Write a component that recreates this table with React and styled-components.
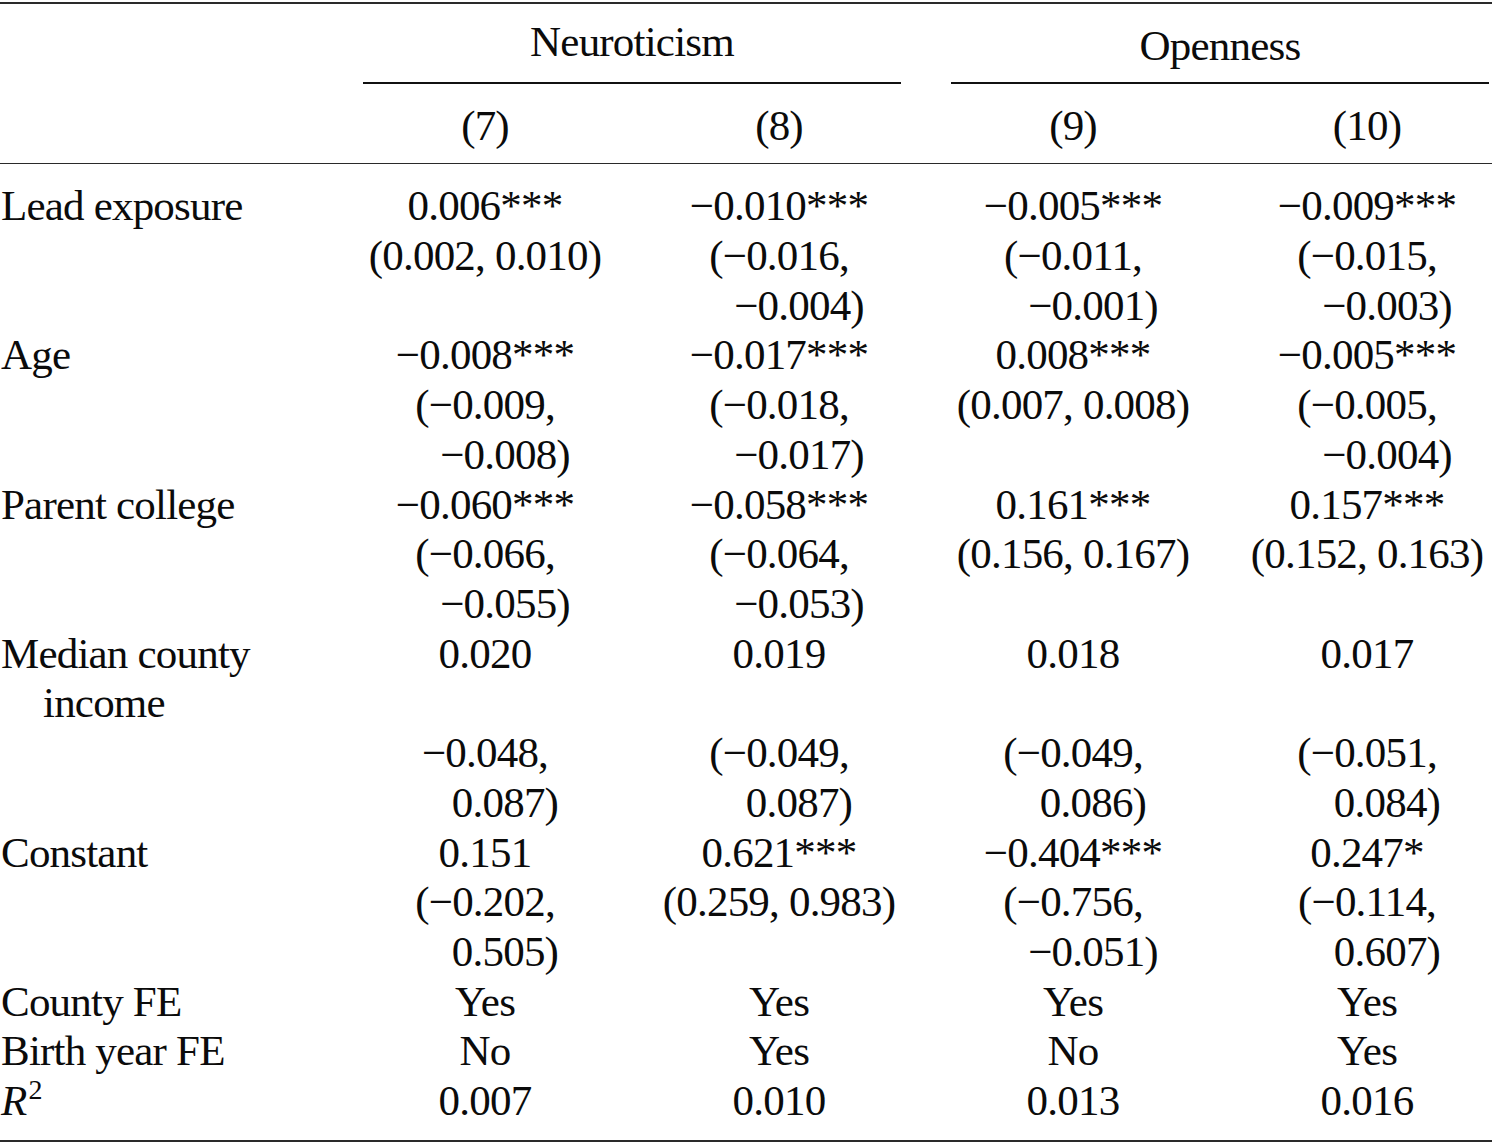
import React from "react";
import styled, { createGlobalStyle } from "styled-components";

const GlobalStyle = createGlobalStyle`
  html, body {
    margin: 0;
    padding: 0;
    background: #ffffff;
  }
`;

const Table = styled.div`
  display: grid;
  grid-template-columns: 316px repeat(4, 250px);
  column-gap: 44px;
  width: 1493px;
  font-family: "Liberation Serif", "Times New Roman", serif;
  font-size: 43px;
  letter-spacing: -0.8px;
  line-height: 49.72px;
  color: #0b0b0b;
`;

const Rule = styled.div`
  grid-column: 1 / -1;
  height: ${({ $weight }) => $weight}px;
  background: #2a2a2a;
  margin-top: ${({ $top }) => $top || 0}px;
  margin-bottom: ${({ $bottom }) => $bottom || 0}px;
`;

const Blank = styled.div``;

const Spanner = styled.div`
  grid-column: span 2;
  display: flex;
  flex-direction: column;
  padding-top: ${({ $drop }) => 12.6 + ($drop || 0)}px;
`;

const SpannerTitle = styled.div`
  text-align: center;
  white-space: nowrap;
`;

const SpannerRule = styled.div`
  height: 1.3px;
  background: #111;
  margin: ${({ $drop }) => 16 - ($drop || 0)}px 3px 0 3px;
`;

const HeadCell = styled.div`
  text-align: center;
  padding-top: 17.3px;
  padding-bottom: 12px;
  white-space: nowrap;
`;

const LabelCell = styled.div`
  display: flex;
  flex-direction: column;
`;

const LabelLine = styled.div`
  white-space: nowrap;
  padding-left: ${({ $hang }) => ($hang ? 43 : 1)}px;
`;

const ValueCell = styled.div`
  display: flex;
  flex-direction: column;
`;

const ValueLine = styled.div`
  text-align: center;
  white-space: nowrap;
  padding-left: ${({ $cont }) => ($cont ? 40 : 0)}px;
`;

const Italic = styled.span`
  font-style: italic;
`;

const Sup = styled.sup`
  font-size: 28px;
  line-height: 0;
  vertical-align: 16px;
  margin-left: 2px;
`;

const M = "\u2212";

const rows = [
  {
    label: ["Lead exposure"],
    cells: [
      ["0.006***", "(0.002, 0.010)"],
      [`${M}0.010***`, `(${M}0.016,`, `>${M}0.004)`],
      [`${M}0.005***`, `(${M}0.011,`, `>${M}0.001)`],
      [`${M}0.009***`, `(${M}0.015,`, `>${M}0.003)`],
    ],
  },
  {
    label: ["Age"],
    cells: [
      [`${M}0.008***`, `(${M}0.009,`, `>${M}0.008)`],
      [`${M}0.017***`, `(${M}0.018,`, `>${M}0.017)`],
      ["0.008***", "(0.007, 0.008)"],
      [`${M}0.005***`, `(${M}0.005,`, `>${M}0.004)`],
    ],
  },
  {
    label: ["Parent college"],
    cells: [
      [`${M}0.060***`, `(${M}0.066,`, `>${M}0.055)`],
      [`${M}0.058***`, `(${M}0.064,`, `>${M}0.053)`],
      ["0.161***", "(0.156, 0.167)"],
      ["0.157***", "(0.152, 0.163)"],
    ],
  },
  {
    label: ["Median county", ">income"],
    cells: [
      ["0.020", "", `${M}0.048,`, ">0.087)"],
      ["0.019", "", `(${M}0.049,`, ">0.087)"],
      ["0.018", "", `(${M}0.049,`, ">0.086)"],
      ["0.017", "", `(${M}0.051,`, ">0.084)"],
    ],
  },
  {
    label: ["Constant"],
    cells: [
      ["0.151", `(${M}0.202,`, ">0.505)"],
      ["0.621***", "(0.259, 0.983)"],
      [`${M}0.404***`, `(${M}0.756,`, `>${M}0.051)`],
      ["0.247*", `(${M}0.114,`, ">0.607)"],
    ],
  },
  {
    label: ["County FE"],
    cells: [["Yes"], ["Yes"], ["Yes"], ["Yes"]],
  },
  {
    label: ["Birth year FE"],
    cells: [["No"], ["Yes"], ["No"], ["Yes"]],
  },
  {
    label: ["R2"],
    cells: [["0.007"], ["0.010"], ["0.013"], ["0.016"]],
  },
];

// a leading ">" marks a wrapped continuation line
const split = (text) =>
  text.startsWith(">") ? [text.slice(1), true] : [text, false];

const Label = ({ lines }) => (
  <LabelCell>
    {lines.map((line, i) => {
      if (line === "R2") {
        return (
          <LabelLine key={i}>
            <Italic>R</Italic>
            <Sup>2</Sup>
          </LabelLine>
        );
      }
      const [text, hang] = split(line);
      return (
        <LabelLine key={i} $hang={hang}>
          {text}
        </LabelLine>
      );
    })}
  </LabelCell>
);

const Value = ({ lines }) => (
  <ValueCell>
    {lines.map((line, i) => {
      const [text, cont] = split(line);
      return (
        <ValueLine key={i} $cont={cont}>
          {text || "\u00a0"}
        </ValueLine>
      );
    })}
  </ValueCell>
);

const App = () => (
  <>
    <GlobalStyle />
    <Table>
      <Rule $weight={2} $top={2} />

      <Blank />
      <Spanner>
        <SpannerTitle>Neuroticism</SpannerTitle>
        <SpannerRule />
      </Spanner>
      <Spanner $drop={4}>
        <SpannerTitle>Openness</SpannerTitle>
        <SpannerRule $drop={4} />
      </Spanner>

      <Blank />
      {["(7)", "(8)", "(9)", "(10)"].map((h) => (
        <HeadCell key={h}>{h}</HeadCell>
      ))}

      <Rule $weight={1.6} $bottom={17} />

      {rows.map((row) => (
        <React.Fragment key={row.label[0]}>
          <Label lines={row.label} />
          {row.cells.map((cell, i) => (
            <Value key={i} lines={cell} />
          ))}
        </React.Fragment>
      ))}

      <Rule $weight={2} $top={14.5} />
    </Table>
  </>
);

export default App;
